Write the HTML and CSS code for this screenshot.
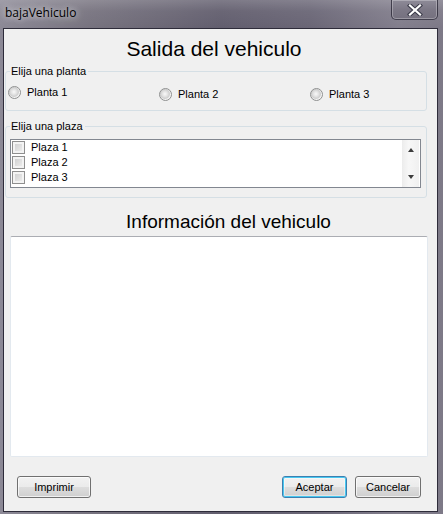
FILE: index.html
```html
<!DOCTYPE html>
<html lang="es">
<head>
<meta charset="utf-8">
<title>bajaVehiculo</title>
<link rel="stylesheet" href="styles.css">
</head>
<body>
<div class="window">
  <div class="titlebar">
    <span class="title">bajaVehiculo</span>
    <button class="close" aria-label="Cerrar">
      <svg width="16" height="12" viewBox="0 0 16 12">
        <path d="M3 1.5 L13 10.5 M13 1.5 L3 10.5" stroke="#3a3a48" stroke-width="4.2" stroke-linecap="square" fill="none"/>
        <path d="M3 1.5 L13 10.5 M13 1.5 L3 10.5" stroke="#ffffff" stroke-width="2.2" stroke-linecap="square" fill="none"/>
      </svg>
    </button>
  </div>
  <div class="client">
    <h1 class="heading heading-salida">Salida del vehiculo</h1>
    <fieldset class="group group-planta">
      <legend>Elija una planta</legend>
      <div class="radios">
        <label class="radio-item first"><span class="radio"></span>Planta 1</label>
        <label class="radio-item"><span class="radio"></span>Planta 2</label>
        <label class="radio-item"><span class="radio"></span>Planta 3</label>
      </div>
    </fieldset>
    <fieldset class="group group-plaza">
      <legend>Elija una plaza</legend>
      <div class="listbox">
        <ul class="items">
          <li><span class="check"></span>Plaza 1</li>
          <li><span class="check"></span>Plaza 2</li>
          <li><span class="check"></span>Plaza 3</li>
        </ul>
        <div class="scrollbar">
          <span class="arrow up"></span>
          <span class="arrow down"></span>
        </div>
      </div>
    </fieldset>
    <h2 class="heading heading-info">Información del vehiculo</h2>
    <div class="textbox"></div>
    <div class="buttons">
      <button class="btn btn-imprimir">Imprimir</button>
      <span class="spacer"></span>
      <button class="btn btn-aceptar">Aceptar</button>
      <button class="btn btn-cancelar">Cancelar</button>
    </div>
  </div>
</div>
</body>
</html>
```

FILE: styles.css
```css
* { box-sizing: border-box; }
html, body { margin: 0; padding: 0; }
body {
  width: 443px;
  height: 514px;
  overflow: hidden;
  font-family: "Liberation Sans", Arial, sans-serif;
  font-size: 11px;
  color: #000;
}
.window {
  width: 443px;
  height: 514px;
  background: linear-gradient(90deg, #8c8996 0%, #77737f 20%, #625e6e 50%, #6a6676 70%, #827e8c 90%, #7d7987 100%);
  display: flex;
  flex-direction: column;
}
.titlebar {
  height: 28px;
  display: flex;
  align-items: flex-start;
  justify-content: space-between;
  background: linear-gradient(180deg, rgba(255,255,255,0.18) 0%, rgba(255,255,255,0.05) 40%, rgba(0,0,0,0) 100%);
}
.title {
  font-family: "Open Sans", "Noto Sans", sans-serif;
  font-size: 12px;
  line-height: 16px;
  margin: 5px 0 0 5px;
  color: #000;
  text-shadow: 0 0 6px rgba(255,255,255,0.75), 0 0 10px rgba(255,255,255,0.5);
}
.close {
  width: 47px;
  height: 20px;
  margin: 0 5px 0 0;
  padding: 0;
  border: 1px solid rgba(40,38,52,0.75);
  border-top: none;
  border-radius: 0 0 5px 5px;
  background: linear-gradient(180deg, #8e8b98 0%, #7c7886 50%, #75717f 100%);
  box-shadow: inset 0 0 0 1px rgba(255,255,255,0.28);
  display: flex;
  align-items: center;
  justify-content: center;
}
.close svg { display: block; }
.client {
  margin-left: 3px;
  width: 435px;
  height: 484px;
  background: #f0f0f0;
  border: 1px solid #2e2c3a;
  display: flex;
  flex-direction: column;
}
.heading {
  margin: 0;
  font-weight: normal;
  line-height: 24px;
  text-align: center;
  color: #000;
}
.heading-salida {
  font-size: 21px;
  margin-top: 8px;
  padding-right: 13px;
}
.heading-info {
  font-size: 19px;
  margin-top: 12px;
  padding-left: 16px;
}
.group {
  margin: 0 0 0 1px;
  padding: 0;
  width: 422px;
  border: 1px solid #d5dfe5;
  border-radius: 3px;
  min-width: 0;
}
.group legend {
  font-size: 11px;
  line-height: 13px;
  padding: 0 2px 0 1px;
  margin-left: 4px;
}
.group-planta { margin-top: 4px; }
.group-plaza { margin-top: 9px; }
.radios {
  display: grid;
  grid-template-columns: 151px 151px 1fr;
  padding: 8px 0 9px 2px;
}
.radio-item {
  display: flex;
  align-items: center;
  gap: 6px;
  height: 13px;
  margin-top: 2px;
  font-size: 11px;
  line-height: 13px;
}
.radio-item.first { margin-top: 0; }
.radio {
  width: 13px;
  height: 13px;
  border-radius: 50%;
  border: 1px solid #8f9090;
  background: radial-gradient(circle at 45% 45%, #f9f9f9 0, #e4e4e4 2.5px, #cfcfcf 4.5px, #f4f4f4 5.5px);
  flex: none;
}
.listbox {
  margin: 6px 0 9px 4px;
  width: 411px;
  height: 49px;
  border: 1px solid #828790;
  background: #fff;
  display: flex;
}
.items {
  list-style: none;
  margin: 0;
  padding: 0 0 0 1px;
  flex: 1;
}
.items li {
  height: 15px;
  display: flex;
  align-items: center;
  gap: 6px;
  font-size: 11px;
  line-height: 15px;
}
.check {
  width: 13px;
  height: 13px;
  border: 1px solid #8f8f8f;
  background: linear-gradient(135deg, #c9cacb 0%, #e2e2e2 60%, #f2f2f2 100%);
  box-shadow: inset 0 0 0 2px #f3f3f3;
  flex: none;
}
.scrollbar {
  width: 17px;
  margin: 0 1px 0 0;
  background: linear-gradient(90deg, #ececec 0%, #f7f7f7 40%, #f0f0f0 100%);
  display: flex;
  flex-direction: column;
  justify-content: space-between;
  align-items: center;
  padding: 8px 0 8px 0;
}
.arrow {
  width: 0;
  height: 0;
  border-left: 3.5px solid transparent;
  border-right: 3.5px solid transparent;
}
.arrow.up { border-bottom: 4px solid #3c3c3c; }
.arrow.down { border-top: 4px solid #3c3c3c; }
.textbox {
  margin: 2px 0 0 6px;
  width: 418px;
  height: 221px;
  background: #fff;
  border: 1px solid #e3e9ef;
  border-top-color: #abadb3;
  border-radius: 2px;
}
.buttons {
  display: flex;
  align-items: center;
  gap: 8px;
  margin-top: 19px;
  padding: 0 16px 0 13px;
}
.spacer { flex: 1; }
.btn {
  height: 22px;
  padding: 0;
  font-family: "Liberation Sans", Arial, sans-serif;
  font-size: 11px;
  color: #000;
  border: 1px solid #707070;
  border-radius: 3px;
  background: linear-gradient(180deg, #f2f2f2 0%, #ebebeb 50%, #dddddd 51%, #cfcfcf 100%);
  box-shadow: inset 0 0 0 1px rgba(255,255,255,0.7);
}
.btn-imprimir { width: 74px; }
.btn-aceptar {
  width: 65px;
  border-color: #3c7fb1;
  box-shadow: inset 0 0 0 1px #48c8f0, inset 0 0 0 2px rgba(255,255,255,0.4);
}
.btn-cancelar { width: 66px; }
```
